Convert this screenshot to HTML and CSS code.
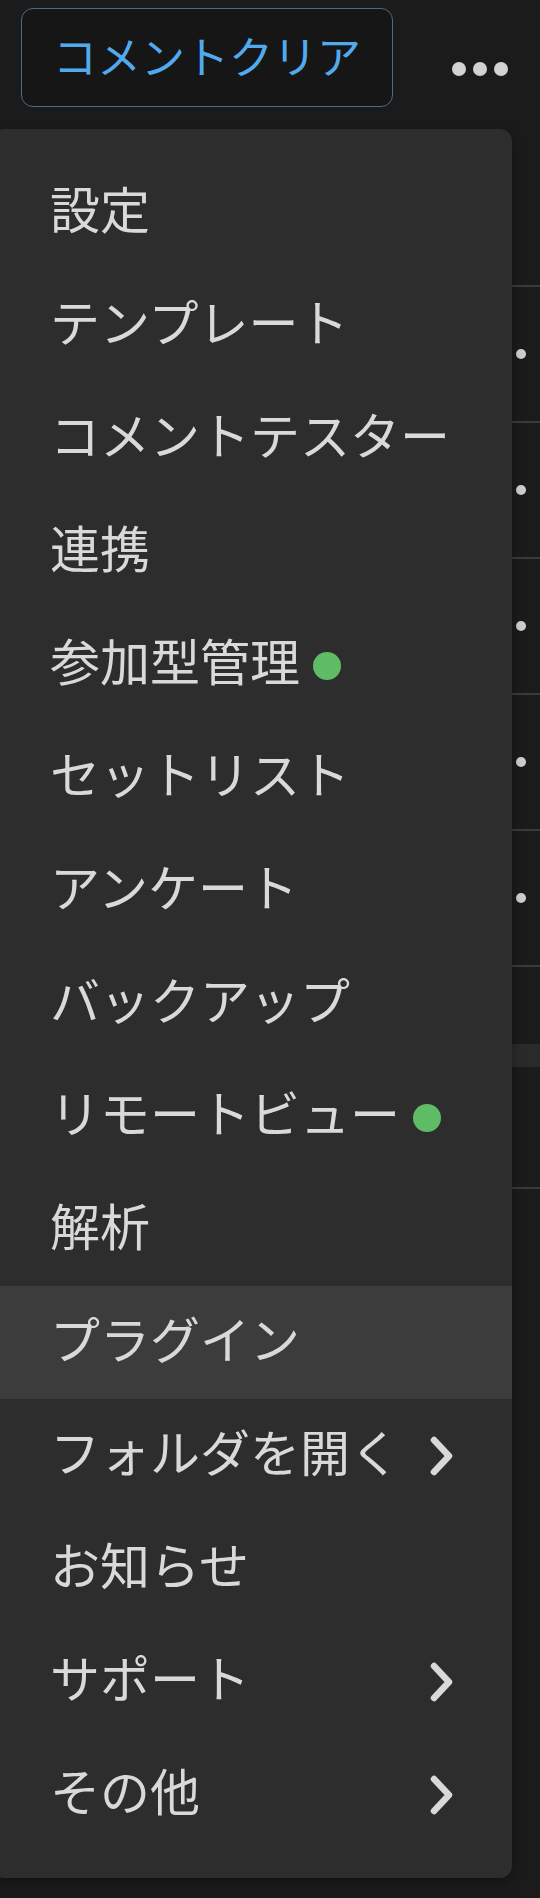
FILE: index.html
```html
<!DOCTYPE html>
<html lang="ja">
<head>
<meta charset="utf-8">
<title>メニュー</title>
<link rel="stylesheet" href="styles.css">
</head>
<body>
<div class="page">
  <header class="toolbar">
    <button class="clear-btn">コメントクリア</button>
    <div class="more"><span></span><span></span><span></span></div>
  </header>

  <div class="list">
    <div class="row"><span class="row-dot"></span></div>
    <div class="row"><span class="row-dot"></span></div>
    <div class="row"><span class="row-dot"></span></div>
    <div class="row"><span class="row-dot"></span></div>
    <div class="row"><span class="row-dot"></span></div>
    <div class="gap-block"></div>
    <div class="band"></div>
    <div class="tail-block"></div>
  </div>

  <nav class="menu">
    <div class="item">設定</div>
    <div class="item">テンプレート</div>
    <div class="item">コメントテスター</div>
    <div class="item">連携</div>
    <div class="item">参加型管理<span class="badge"></span></div>
    <div class="item">セットリスト</div>
    <div class="item">アンケート</div>
    <div class="item">バックアップ</div>
    <div class="item">リモートビュー<span class="badge"></span></div>
    <div class="item">解析</div>
    <div class="item hover">プラグイン</div>
    <div class="item sub">フォルダを開く<svg class="chev" viewBox="0 0 24 40" width="24" height="40"><polyline points="4,4 19,20 4,36" fill="none" stroke="currentColor" stroke-width="6.5" stroke-linecap="round" stroke-linejoin="round"/></svg></div>
    <div class="item">お知らせ</div>
    <div class="item sub">サポート<svg class="chev" viewBox="0 0 24 40" width="24" height="40"><polyline points="4,4 19,20 4,36" fill="none" stroke="currentColor" stroke-width="6.5" stroke-linecap="round" stroke-linejoin="round"/></svg></div>
    <div class="item sub">その他<svg class="chev" viewBox="0 0 24 40" width="24" height="40"><polyline points="4,4 19,20 4,36" fill="none" stroke="currentColor" stroke-width="6.5" stroke-linecap="round" stroke-linejoin="round"/></svg></div>
  </nav>
</div>
</body>
</html>
```

FILE: styles.css
```css
html, body {
  margin: 0;
  padding: 0;
  background: #1b1b1b;
}

body {
  font-family: "Noto Sans CJK JP", "Noto Sans", sans-serif;
  color: #d9d9d9;
}

.page {
  position: relative;
  width: 540px;
  height: 1898px;
  overflow: hidden;
}

.toolbar {
  display: flex;
  align-items: flex-start;
  height: 129px;
  box-sizing: border-box;
  padding: 8px 0 0 21px;
}

.clear-btn {
  width: 372px;
  height: 99px;
  box-sizing: border-box;
  border: 1.5px solid #4b6b8b;
  border-radius: 12px;
  background: #161616;
  color: #52aaee;
  font-family: "Noto Sans CJK JP", sans-serif;
  font-size: 44px;
  line-height: 1;
  padding: 0 0 5px;
  display: flex;
  align-items: center;
  justify-content: center;
  white-space: nowrap;
}

.more {
  display: flex;
  gap: 7px;
  margin: 54px 0 0 59px;
}

.more span {
  width: 14px;
  height: 14px;
  border-radius: 50%;
  background: #d2d2d2;
}

.list {
  margin-top: 156px;
  border-top: 2px solid #3a3a3a;
}

.row {
  height: 134px;
  border-bottom: 2px solid #3a3a3a;
  display: flex;
  align-items: center;
  padding-left: 516px;
}

.row-dot {
  width: 10px;
  height: 10px;
  border-radius: 50%;
  background: #cfcfcf;
}

.gap-block {
  height: 77px;
}

.band {
  height: 23px;
  background: #2a2a2a;
}

.tail-block {
  height: 120px;
  border-bottom: 2px solid #3a3a3a;
}

.menu {
  position: absolute;
  left: -8px;
  top: 129px;
  width: 520px;
  box-sizing: border-box;
  padding: 27px 0;
  background: #2d2d2d;
  border-radius: 12px;
  box-shadow: 0 4px 12px rgba(0, 0, 0, 0.35);
}

.item {
  height: 113px;
  display: flex;
  align-items: center;
  padding: 0 58px 11px 58px;
  box-sizing: border-box;
  font-size: 50px;
  line-height: 1;
  color: #d9d9d9;
  white-space: nowrap;
}

.item.hover {
  background: #3c3c3c;
}

.item.sub {
  justify-content: space-between;
}

.badge {
  width: 28px;
  height: 28px;
  border-radius: 50%;
  background: #60bb67;
  margin-left: 13px;
  margin-top: 13px;
}

.chev {
  display: block;
  color: #d9d9d9;
  margin-top: 12px;
}
```
